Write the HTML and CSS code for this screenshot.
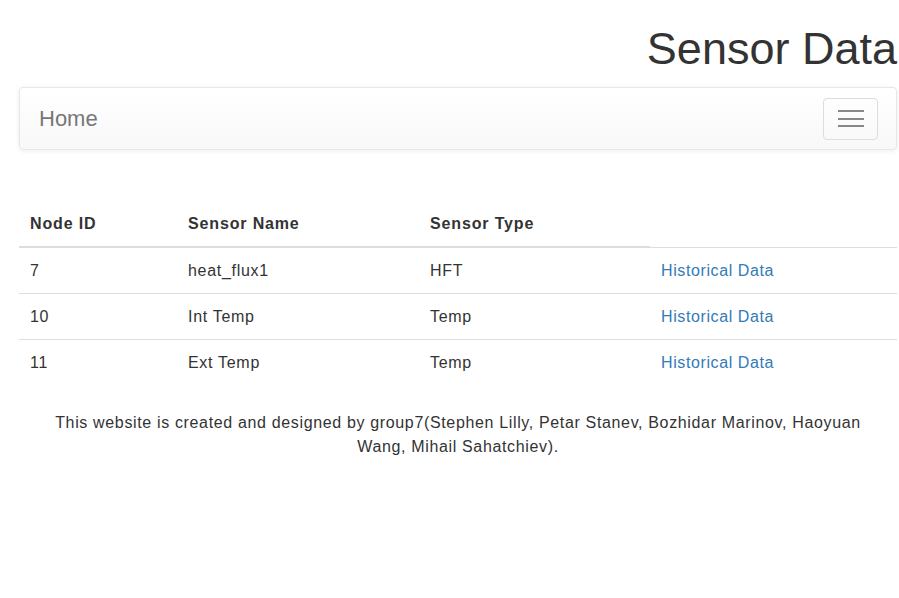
FILE: index.html
```html
<!DOCTYPE html>
<html>
<head>
<meta charset="utf-8">
<title>Sensor Data</title>
<link rel="stylesheet" href="styles.css">
</head>
<body>
<div class="page">
  <h1 class="title">Sensor Data</h1>
  <nav class="navbar">
    <a class="brand" href="#">Home</a>
    <button class="toggler" type="button" aria-label="Toggle navigation">
      <span class="bar"></span>
      <span class="bar"></span>
      <span class="bar"></span>
    </button>
  </nav>
  <table class="sensors">
    <thead>
      <tr>
        <th class="c1">Node ID</th>
        <th class="c2">Sensor Name</th>
        <th class="c3">Sensor Type</th>
      </tr>
    </thead>
    <tbody>
      <tr>
        <td>7</td>
        <td>heat_flux1</td>
        <td>HFT</td>
        <td><a href="#">Historical Data</a></td>
      </tr>
      <tr>
        <td>10</td>
        <td>Int Temp</td>
        <td>Temp</td>
        <td><a href="#">Historical Data</a></td>
      </tr>
      <tr>
        <td>11</td>
        <td>Ext Temp</td>
        <td>Temp</td>
        <td><a href="#">Historical Data</a></td>
      </tr>
    </tbody>
  </table>
  <p class="footer">This website is created and designed by group7(Stephen Lilly, Petar Stanev, Bozhidar Marinov, Haoyuan Wang, Mihail Sahatchiev).</p>
</div>
</body>
</html>
```

FILE: styles.css
```css
html, body {
  margin: 0;
  padding: 0;
  background: #fff;
}
body {
  font-family: "Liberation Sans", Arial, Helvetica, sans-serif;
  font-size: 16px;
  line-height: 24px;
  color: #333;
}
.page {
  padding: 0 2px 0 19px;
}
.title {
  margin: 24px 0 14px;
  font-size: 45px;
  line-height: 49px;
  font-weight: 400;
  text-align: right;
  color: #333;
}
.navbar {
  display: flex;
  align-items: center;
  justify-content: space-between;
  height: 61px;
  padding: 0 18px 0 19px;
  border: 1px solid #e7e7e7;
  border-radius: 4px;
  background: linear-gradient(to bottom, #ffffff 0%, #f8f8f8 100%);
  box-shadow: inset 0 1px 0 rgba(255,255,255,.15), 0 1px 5px rgba(0,0,0,.075);
}
.brand {
  font-size: 22px;
  line-height: 24px;
  color: #777;
  text-decoration: none;
}
.toggler {
  display: flex;
  flex-direction: column;
  align-items: center;
  justify-content: center;
  gap: 5.5px;
  width: 55px;
  height: 42px;
  padding: 0;
  background: transparent;
  border: 1px solid #ddd;
  border-radius: 4px;
}
.bar {
  display: block;
  width: 26px;
  height: 2px;
  background: #888;
}
.sensors {
  width: 100%;
  margin-top: 51px;
  border-collapse: collapse;
  border-spacing: 0;
}
.sensors th,
.sensors td {
  padding: 12px 10px 11px 11px;
  line-height: 22px;
  text-align: left;
  vertical-align: top;
}
.sensors th {
  font-weight: 700;
  letter-spacing: 0.85px;
  border-bottom: 2px solid #ddd;
}
.sensors td {
  letter-spacing: 0.7px;
  border-top: 1px solid #ddd;
}
.c1 { width: 137px; }
.c2 { width: 221px; }
.c3 { width: 210px; }
.sensors a {
  color: #337ab7;
  letter-spacing: 0.6px;
  text-decoration: none;
}
.footer {
  margin: 26px 0 0;
  padding: 0 30px;
  letter-spacing: 0.65px;
  text-align: center;
}
```
